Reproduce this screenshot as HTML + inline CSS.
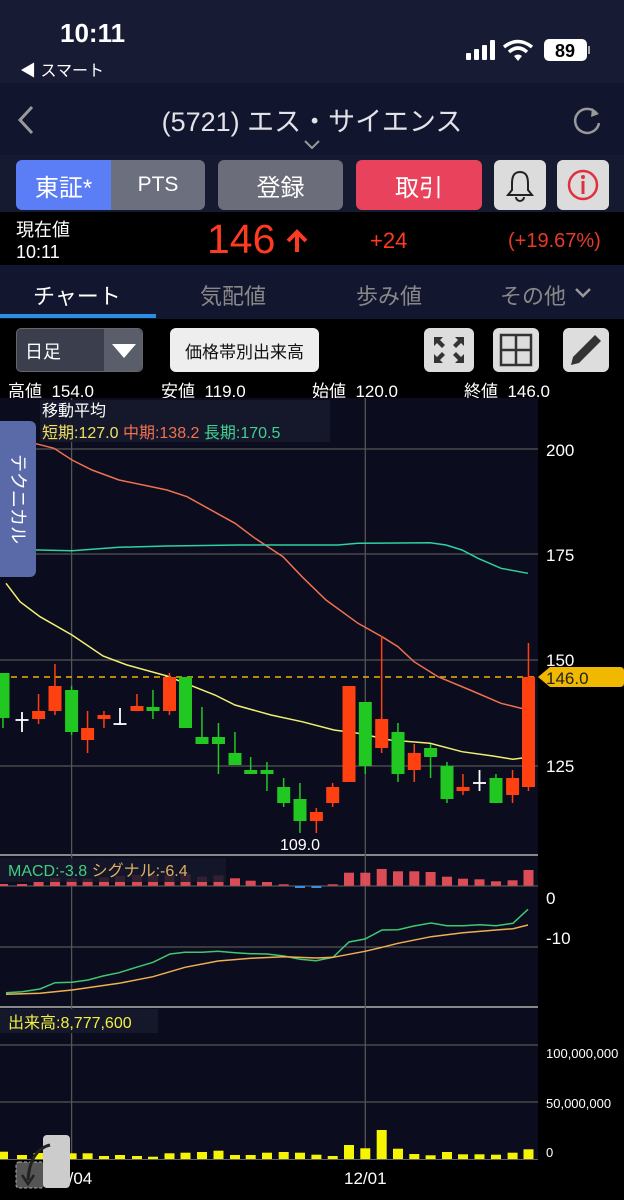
<!DOCTYPE html>
<html><head><meta charset="utf-8">
<style>
*{margin:0;padding:0;box-sizing:border-box}
body{width:624px;height:1200px;background:#000;font-family:"Liberation Sans","Noto Sans CJK JP",sans-serif;color:#fff;position:relative;overflow:hidden}
.a{position:absolute}
.btn{position:absolute;display:flex;align-items:center;justify-content:center;border-radius:6px;font-size:24px}
</style></head><body>
<div class="a" style="left:0;top:0;width:624px;height:83px;background:#171b34"></div>
<div class="a" style="left:60px;top:18px;font-size:26px;font-weight:bold">10:11</div>
<div class="a" style="left:20px;top:57px;font-size:16px">◀ スマート</div>
<svg class="a" style="left:464px;top:38px" width="130" height="26" viewBox="0 0 130 26">
<rect x="2" y="15" width="5" height="7" rx="1" fill="#fff"/><rect x="10" y="11" width="5" height="11" rx="1" fill="#fff"/><rect x="18" y="7" width="5" height="15" rx="1" fill="#fff"/><rect x="26" y="2" width="5" height="20" rx="1" fill="#fff"/>
<path d="M40 9 Q54 -2 68 9" stroke="#fff" stroke-width="3.5" fill="none"/><path d="M45 14 Q54 6 63 14" stroke="#fff" stroke-width="3.5" fill="none"/><path d="M50 18 L54 23 L58 18 Q54 15 50 18Z" fill="#fff"/>
<rect x="80" y="1" width="43" height="22" rx="5" fill="#fff"/><rect x="124" y="8" width="2" height="8" fill="#aaa"/>
<text x="101" y="19" font-size="18" font-weight="bold" fill="#000" text-anchor="middle" font-family="Liberation Sans">89</text></svg>
<div class="a" style="left:0;top:83px;width:624px;height:72px;background:#11152e"></div>
<svg class="a" style="left:14px;top:104px" width="24" height="32"><path d="M18 3 L6 16 L18 29" stroke="#999" stroke-width="3" fill="none"/></svg>
<div class="a" style="left:0;width:624px;top:100px;text-align:center;font-size:27px;color:#e2e2e8">(5721) エス・サイエンス</div>
<svg class="a" style="left:303px;top:139px" width="18" height="12"><path d="M2 2 L9 9 L16 2" stroke="#999" stroke-width="2" fill="none"/></svg>
<svg class="a" style="left:570px;top:104px" width="34" height="34"><path d="M27 10 A12 12 0 1 0 29 19" stroke="#999" stroke-width="2.5" fill="none"/><path d="M22 4 L29 10 L21 13Z" fill="#999"/></svg>
<div class="a" style="left:0;top:155px;width:624px;height:57px;background:#161a30"></div>
<div class="btn" style="left:16px;top:160px;width:95px;height:50px;background:#5b7df6;border-radius:6px 0 0 6px">東証*</div>
<div class="btn" style="left:111px;top:160px;width:94px;height:50px;background:#6c6f7e;border-radius:0 6px 6px 0;font-size:21px">PTS</div>
<div class="btn" style="left:218px;top:160px;width:125px;height:50px;background:#6b6e7a">登録</div>
<div class="btn" style="left:356px;top:160px;width:126px;height:50px;background:#e8425c">取引</div>
<div class="btn" style="left:494px;top:160px;width:52px;height:50px;background:#dcdcdc"><svg width="30" height="34"><path d="M15 4 C8 4 7 10 7 16 L7 22 L3 27 L27 27 L23 22 L23 16 C23 10 22 4 15 4Z" stroke="#222" stroke-width="2" fill="none"/><path d="M11 29 A4 4 0 0 0 19 29" stroke="#222" stroke-width="2" fill="none"/></svg></div>
<div class="btn" style="left:557px;top:160px;width:52px;height:50px;background:#dcdcdc"><svg width="34" height="34"><circle cx="17" cy="17" r="14" stroke="#e03040" stroke-width="2.5" fill="none"/><rect x="15.5" y="13" width="3" height="13" fill="#e03040"/><circle cx="17" cy="9" r="2" fill="#e03040"/></svg></div>
<div class="a" style="left:16px;top:216px;font-size:18px">現在値</div>
<div class="a" style="left:16px;top:242px;font-size:18px">10:11</div>
<div class="a" style="left:207px;top:216px;font-size:41px;color:#ff3a22">146</div>
<svg class="a" style="left:285px;top:228px" width="24" height="26"><path d="M12 24 V5 M3 13 L12 4 L21 13" stroke="#ff3a22" stroke-width="4" fill="none"/></svg>
<div class="a" style="left:370px;top:228px;font-size:22px;color:#ff3a22">+24</div>
<div class="a" style="left:508px;top:230px;font-size:20px;color:#e83a2a">(+19.67%)</div>
<div class="a" style="left:0;top:265px;width:624px;height:54px;background:#12162f"></div>
<div class="a" style="left:33px;top:279px;font-size:22px">チャート</div>
<div class="a" style="left:200px;top:279px;font-size:22px;color:#888">気配値</div>
<div class="a" style="left:356px;top:279px;font-size:22px;color:#888">歩み値</div>
<div class="a" style="left:500px;top:279px;font-size:22px;color:#888">その他</div>
<svg class="a" style="left:574px;top:287px" width="18" height="12"><path d="M2 2 L9 9 L16 2" stroke="#999" stroke-width="2.5" fill="none"/></svg>
<div class="a" style="left:0;top:314px;width:156px;height:4px;background:#2a8fe0"></div>
<div class="a" style="left:16px;top:328px;width:127px;height:44px;background:#3b3e4c;border-radius:5px;border:1px solid #666"></div>
<div class="a" style="left:104px;top:329px;width:38px;height:42px;background:#5a5d6a;border-radius:0 5px 5px 0"></div>
<svg class="a" style="left:111px;top:343px" width="26" height="16"><path d="M1 1 L25 1 L13 15Z" fill="#fff"/></svg>
<div class="a" style="left:25px;top:338px;font-size:18px">日足</div>
<div class="a" style="left:170px;top:328px;width:149px;height:44px;background:#eee;border-radius:6px;color:#111;font-size:17px;display:flex;align-items:center;justify-content:center">価格帯別出来高</div>
<svg class="a" style="left:424px;top:328px" width="186" height="46">
<rect x="0" y="0" width="50" height="44" rx="6" fill="#ddd"/>
<path d="M10 9 L19 9 L16 12 L21 17 L18 20 L13 15 L10 18Z M40 9 L31 9 L34 12 L29 17 L32 20 L37 15 L40 18Z M10 35 L19 35 L16 32 L21 27 L18 24 L13 29 L10 26Z M40 35 L31 35 L34 32 L29 27 L32 24 L37 29 L40 26Z" fill="#333"/>
<rect x="69" y="0" width="46" height="44" rx="6" fill="#ddd"/>
<rect x="77" y="7" width="30" height="30" stroke="#333" stroke-width="2.5" fill="none"/><path d="M92 7 V37 M77 22 H107" stroke="#333" stroke-width="2.5"/>
<rect x="139" y="0" width="46" height="44" rx="6" fill="#ddd"/>
<path d="M147 37 L149 29 L171 7 L177 13 L155 35Z" fill="#333"/></svg>
<div class="a" style="left:8px;top:377px;font-size:17px;white-space:pre">高値  154.0</div>
<div class="a" style="left:161px;top:377px;font-size:17px;white-space:pre">安値  119.0</div>
<div class="a" style="left:312px;top:377px;font-size:17px;white-space:pre">始値  120.0</div>
<div class="a" style="left:464px;top:377px;font-size:17px;white-space:pre">終値  146.0</div>
<svg class="a" style="left:0;top:0" width="624" height="1200" viewBox="0 0 624 1200">
<rect x="0" y="398" width="538" height="762" fill="#0b0c1e"/>
<g stroke="#555" stroke-width="1.3">
<line x1="0" y1="449" x2="538" y2="449"/><line x1="0" y1="554" x2="538" y2="554"/><line x1="0" y1="660" x2="538" y2="660"/><line x1="0" y1="766" x2="538" y2="766"/>
<line x1="0" y1="855" x2="538" y2="855" stroke="#888" stroke-width="2"/>
<line x1="0" y1="947" x2="538" y2="947"/>
<line x1="0" y1="1007" x2="538" y2="1007" stroke="#888" stroke-width="2"/>
<line x1="0" y1="1045" x2="538" y2="1045"/><line x1="0" y1="1102" x2="538" y2="1102"/>
<line x1="71.6" y1="398" x2="71.6" y2="1160"/><line x1="365.3" y1="398" x2="365.3" y2="1160"/>
<line x1="0" y1="886" x2="538" y2="886"/>
</g>
<line x1="0" y1="677" x2="538" y2="677" stroke="#f0b400" stroke-width="1.5" stroke-dasharray="6,5"/>
<rect x="40" y="400" width="290" height="42" fill="#15172b"/>
<text x="42" y="416" font-size="16" fill="#fff">移動平均</text>
<text x="42" y="438" font-size="16"><tspan fill="#f0e060">短期:127.0</tspan><tspan fill="#f07050"> 中期:138.2</tspan><tspan fill="#40d090"> 長期:170.5</tspan></text>
<polyline fill="none" stroke="#f07050" stroke-width="1.5" points="6,441.7 32,442.7 54,448.3 72,460 92,470 119,480 167,490 187,496.7 235,523.3 255,538.3 283,556.7 302,576.7 326,600 358,623.3 382,636.7 398,646.7 414,661.7 438,676.7 470,690 501,703.3 528,710"/>
<polyline fill="none" stroke="#30d0a0" stroke-width="1.5" points="6,549.3 72,550.7 119,547.3 167,546 239,545 338,545 358,543.3 430,542.7 446,545 462,550 478,558.3 501,568.3 528,573.3"/>
<polyline fill="none" stroke="#f0f070" stroke-width="1.5" points="6,583.3 20,601.7 40,616.7 72,635 103,656 127,665 167,676 215,695 235,705 271,715 302,721.7 334,730 358,733.3 390,740 430,743.3 462,751.7 493,756 513,759.3 528,757.3"/>
<g fill="#22c822">
<rect x="2.2" y="673" width="1.5" height="55"/><rect x="-3.5" y="673" width="13" height="45"/>
<rect x="70.8" y="686" width="1.5" height="49"/><rect x="65.1" y="690" width="13" height="42"/>
<rect x="152.2" y="690" width="1.5" height="29"/><rect x="146.5" y="707" width="13" height="4"/>
<rect x="179" y="677" width="13" height="51"/>
<rect x="201.2" y="707" width="1.5" height="37"/><rect x="195.5" y="737" width="13" height="7"/>
<rect x="217.7" y="723" width="1.5" height="51"/><rect x="212" y="737" width="13" height="7"/>
<rect x="234.2" y="732" width="1.5" height="33"/><rect x="228.5" y="753" width="13" height="12"/>
<rect x="249.9" y="757" width="1.5" height="17"/><rect x="244.2" y="770" width="13" height="4"/>
<rect x="266.2" y="762" width="1.5" height="29"/><rect x="260.5" y="770" width="13" height="4"/>
<rect x="282.9" y="778" width="1.5" height="29"/><rect x="277.2" y="787" width="13" height="16"/>
<rect x="299.2" y="783" width="1.5" height="50"/><rect x="293.5" y="799" width="13" height="22"/>
<rect x="364.5" y="702" width="1.5" height="72"/><rect x="358.8" y="702" width="13" height="64"/>
<rect x="397.2" y="723" width="1.5" height="59"/><rect x="391.5" y="732" width="13" height="42"/>
<rect x="429.8" y="744" width="1.5" height="34"/><rect x="424.1" y="748" width="13" height="9"/>
<rect x="446.2" y="762" width="1.5" height="41"/><rect x="440.5" y="766" width="13" height="33"/>
<rect x="495.2" y="774" width="1.5" height="29"/><rect x="489.5" y="778" width="13" height="25"/>
</g>
<g fill="#ff4010">
<rect x="37.8" y="694" width="1.5" height="30"/><rect x="32.1" y="711" width="13" height="8"/>
<rect x="54.2" y="664" width="1.5" height="51"/><rect x="48.5" y="686" width="13" height="25"/>
<rect x="86.8" y="711" width="1.5" height="42"/><rect x="81.1" y="728" width="13" height="12"/>
<rect x="103.2" y="711" width="1.5" height="17"/><rect x="97.5" y="715" width="13" height="4"/>
<rect x="136.2" y="694" width="1.5" height="17"/><rect x="130.5" y="706" width="13" height="5"/>
<rect x="168.7" y="673" width="1.5" height="42"/><rect x="163" y="677" width="13" height="34"/>
<rect x="315.6" y="808" width="1.5" height="25"/><rect x="309.9" y="812" width="13" height="9"/>
<rect x="331.9" y="783" width="1.5" height="24"/><rect x="326.2" y="787" width="13" height="16"/>
<rect x="342.5" y="686" width="13" height="96"/>
<rect x="380.9" y="636" width="1.5" height="117"/><rect x="375.2" y="719" width="13" height="29"/>
<rect x="413.5" y="744" width="1.5" height="38"/><rect x="407.8" y="753" width="13" height="17"/>
<rect x="462.2" y="774" width="1.5" height="21"/><rect x="456.5" y="787" width="13" height="4"/>
<rect x="511.8" y="770" width="1.5" height="33"/><rect x="506.1" y="778" width="13" height="17"/>
<rect x="527.7" y="643" width="1.5" height="148"/><rect x="522" y="677" width="13" height="110"/>
</g>
<g stroke="#fff" stroke-width="1.8">
<line x1="22" y1="712" x2="22" y2="732"/><line x1="15.5" y1="720" x2="28.5" y2="720"/>
<line x1="120" y1="708" x2="120" y2="725"/><line x1="113.5" y1="724" x2="126.5" y2="724"/>
<line x1="479.5" y1="770" x2="479.5" y2="791"/><line x1="473" y1="783" x2="486" y2="783"/>
</g>
<text x="300" y="850" font-size="16" fill="#fff" text-anchor="middle">109.0</text>
<g fill="#e8505a" opacity="0.95">
<rect x="-2" y="884" width="10" height="2"/><rect x="17" y="884" width="10" height="2"/><rect x="33.6" y="882" width="10" height="4"/><rect x="50" y="878" width="10" height="8"/><rect x="66.6" y="878.7" width="10" height="7"/><rect x="82.6" y="878.7" width="10" height="7"/><rect x="99" y="877.3" width="10" height="8.4"/><rect x="115" y="876" width="10" height="9.7"/><rect x="132" y="874.7" width="10" height="11"/><rect x="148" y="874.7" width="10" height="11"/><rect x="164.5" y="874.7" width="10" height="11"/><rect x="180.5" y="874" width="10" height="11.7"/><rect x="197" y="876.7" width="10" height="9"/><rect x="213.5" y="875.3" width="10" height="10.4"/><rect x="230" y="878.3" width="10" height="7.4"/><rect x="245.7" y="880.7" width="10" height="5"/><rect x="262" y="882" width="10" height="3.7"/><rect x="278.7" y="884.3" width="10" height="1.4"/><rect x="327.7" y="884.3" width="10" height="1.4"/><rect x="344" y="872.7" width="10" height="13"/><rect x="360.3" y="872.7" width="10" height="13"/><rect x="376.7" y="869" width="10" height="16.7"/><rect x="393" y="871.3" width="10" height="14.4"/><rect x="409.3" y="871.3" width="10" height="14.4"/><rect x="425.6" y="872" width="10" height="13.7"/><rect x="442" y="876.7" width="10" height="9"/><rect x="458" y="878.7" width="10" height="7"/><rect x="474.5" y="879.3" width="10" height="6.4"/><rect x="491" y="881.3" width="10" height="4.4"/><rect x="507.6" y="880.3" width="10" height="5.4"/><rect x="523.5" y="870" width="10" height="15.7"/>
</g>
<rect x="0" y="858" width="226" height="24" fill="#15172b" opacity="0.85"/>
<text x="8" y="876" font-size="16"><tspan fill="#40d080">MACD:-3.8</tspan><tspan fill="#e0b060"> シグナル:-6.4</tspan></text>
<rect x="295" y="886" width="10" height="2" fill="#3a90e0"/><rect x="311.4" y="886" width="10" height="2" fill="#3a90e0"/>
<polyline fill="none" stroke="#40c870" stroke-width="1.5" points="6,992.7 22,991.7 40,989 55,982.7 72,982.3 88,980 103,976 119,972.7 135,967.7 153,962.3 170,954 185,952.3 202,952.3 218,951.3 235,952.7 251,953.7 267,954 284,956 300,959.3 316,960.7 333,957.3 349,942 365,939 382,930 398,929.7 414,926 431,923 447,925.7 463,925.7 480,924.7 496,925.7 513,923.3 528,909.3"/>
<polyline fill="none" stroke="#f0b050" stroke-width="1.5" points="6,994.3 40,993.3 72,990 119,983.3 153,976.7 185,967.3 218,961 251,958.3 284,956.7 316,958 333,957.3 365,951.3 382,947.3 398,943.3 431,936.7 463,932.7 496,930 513,928.7 528,925"/>
<rect x="0" y="1009" width="158" height="24" fill="#15172b"/>
<text x="8" y="1028" font-size="16" fill="#f0f040">出来高:8,777,600</text>
<g fill="#f5f500">
<rect x="-2" y="1151.7" width="10" height="7.6"/><rect x="17" y="1155" width="10" height="4.3"/><rect x="33.6" y="1153" width="10" height="6.3"/><rect x="50" y="1152" width="10" height="7.3"/><rect x="66.6" y="1153.3" width="10" height="6"/><rect x="82.6" y="1153.3" width="10" height="6"/><rect x="99" y="1156" width="10" height="3.3"/><rect x="115" y="1155" width="10" height="4.3"/><rect x="132" y="1156" width="10" height="3.3"/><rect x="148" y="1156.7" width="10" height="2.6"/><rect x="164.5" y="1153.3" width="10" height="6"/><rect x="180.5" y="1152.7" width="10" height="6.6"/><rect x="197" y="1152" width="10" height="7.3"/><rect x="213.5" y="1150.7" width="10" height="8.6"/><rect x="230" y="1155" width="10" height="4.3"/><rect x="245.7" y="1155" width="10" height="4.3"/><rect x="262" y="1152.7" width="10" height="6.6"/><rect x="278.7" y="1152" width="10" height="7.3"/><rect x="295" y="1152.7" width="10" height="6.6"/><rect x="311.4" y="1154.7" width="10" height="4.6"/><rect x="327.7" y="1156" width="10" height="3.3"/><rect x="344" y="1145" width="10" height="14.3"/><rect x="360.3" y="1148.3" width="10" height="11"/><rect x="376.7" y="1130" width="10" height="29.3"/><rect x="393" y="1148.7" width="10" height="10.6"/><rect x="409.3" y="1154" width="10" height="5.3"/><rect x="425.6" y="1155.3" width="10" height="4"/><rect x="442" y="1152" width="10" height="7.3"/><rect x="458" y="1154.3" width="10" height="5"/><rect x="474.5" y="1154.3" width="10" height="5"/><rect x="491" y="1154.7" width="10" height="4.6"/><rect x="507.6" y="1152.7" width="10" height="6.6"/><rect x="523.5" y="1149.3" width="10" height="10"/>
</g>
<line x1="0" y1="1159.5" x2="538" y2="1159.5" stroke="#666" stroke-width="1"/>
<g fill="#fff" font-size="17">
<text x="546" y="456">200</text><text x="546" y="561">175</text><text x="546" y="666">150</text><text x="546" y="772">125</text>
<text x="546" y="904">0</text><text x="546" y="944">-10</text>
<text x="546" y="1058" font-size="13">100,000,000</text><text x="546" y="1108" font-size="13">50,000,000</text><text x="546" y="1157" font-size="13">0</text>
<text x="71.6" y="1184" text-anchor="middle">11/04</text><text x="365.3" y="1184" text-anchor="middle">12/01</text>
</g>
<path d="M538 677 L550 667 L620 667 Q624 667 624 671 L624 683 Q624 687 620 687 L550 687Z" fill="#f0b800"/>
<text x="546" y="684" font-size="17" fill="#222">146.0</text>
<rect x="16" y="1162" width="28" height="26" rx="3" fill="#555" stroke="#aaa" stroke-dasharray="3,2"/>
<rect x="43" y="1135" width="27" height="53" rx="4" fill="#ccc"/>
<path d="M50 1145 Q30 1150 28 1180" stroke="#222" stroke-width="3" fill="none"/><path d="M22 1175 L28 1184 L34 1175" stroke="#222" stroke-width="2.5" fill="none"/>
</svg>
<div class="a" style="left:0;top:421px;width:36px;height:156px;background:#5a6aa8;border-radius:0 6px 6px 0"></div>
<div class="a" style="left:0;top:421px;width:36px;height:156px;writing-mode:vertical-rl;text-orientation:sideways;font-size:18px;display:flex;align-items:center;justify-content:center;line-height:36px">テクニカル</div>
</body></html>
